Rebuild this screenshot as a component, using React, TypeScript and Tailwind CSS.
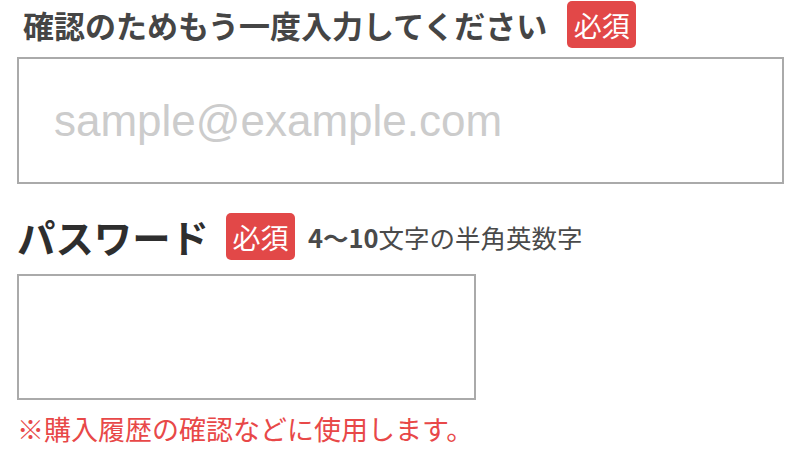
import { useState } from 'react';

const jp = "font-['Noto_Sans_CJK_JP','Noto_Sans',sans-serif]";

function RequiredBadge() {
  return (
    <span className={`inline-flex items-center justify-center w-[69px] h-[47px] rounded-[5px] bg-[#e24848] text-white text-[28px] leading-none ${jp}`}>
      必須
    </span>
  );
}

export default function App() {
  const [email, setEmail] = useState('');
  const [password, setPassword] = useState('');

  return (
    <div className="w-[800px] h-[459px] bg-white pl-[17px] pt-[1px] overflow-hidden">
      {/* confirm email */}
      <div className="flex items-center h-[47px]">
        <label className={`pl-[6px] text-[31px] font-bold text-[#454545] leading-none ${jp}`}>
          確認のためもう一度入力してください
        </label>
        <span className="ml-[20px]">
          <RequiredBadge />
        </span>
      </div>
      <input
        type="email"
        value={email}
        onChange={(e) => setEmail(e.target.value)}
        placeholder="sample@example.com"
        className="mt-[9px] block w-[767px] h-[127px] border-2 border-[#aaaaaa] pl-[35px] text-[44px] text-[#333] placeholder:text-[#cccccc] font-['Liberation_Sans',Arial,sans-serif] outline-none"
      />

      {/* password */}
      <div className="flex items-center h-[49px] mt-[28px]">
        <label className={`text-[38.4px] font-bold text-[#2e2e2e] leading-none ${jp}`}>パスワード</label>
        <span className="ml-[17px]">
          <RequiredBadge />
        </span>
        <span className={`ml-[13px] text-[25.5px] text-[#4a4a4a] leading-none ${jp}`}>
          <b className="font-bold">4〜10</b>文字の半角英数字
        </span>
      </div>
      <input
        type="password"
        value={password}
        onChange={(e) => setPassword(e.target.value)}
        className="mt-[13px] block w-[459px] h-[126px] border-2 border-[#aaaaaa] px-4 text-[28px] outline-none"
      />
      <p className={`mt-[15px] text-[27px] text-[#e84848] leading-none ${jp}`}>
        ※購入履歴の確認などに使用します。
      </p>
    </div>
  );
}
